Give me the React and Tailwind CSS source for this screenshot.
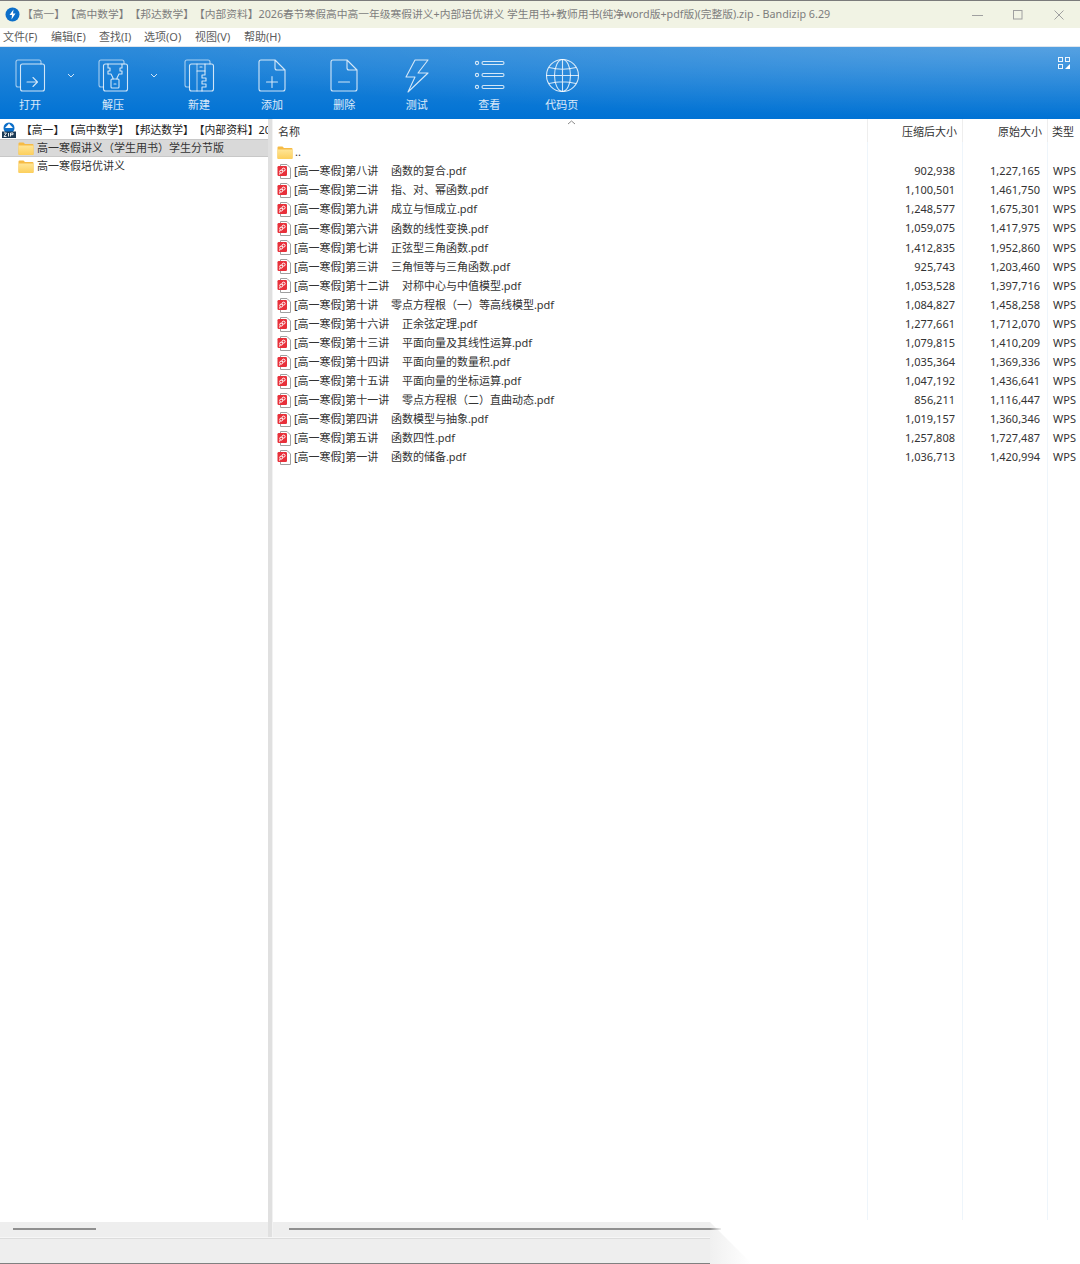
import React from "react";

const FONT = "font-['Noto_Sans','Noto_Sans_CJK_SC',sans-serif]";

const rows = [
  ["[高一寒假]第八讲    函数的复合.pdf", "902,938", "1,227,165"],
  ["[高一寒假]第二讲    指、对、幂函数.pdf", "1,100,501", "1,461,750"],
  ["[高一寒假]第九讲    成立与恒成立.pdf", "1,248,577", "1,675,301"],
  ["[高一寒假]第六讲    函数的线性变换.pdf", "1,059,075", "1,417,975"],
  ["[高一寒假]第七讲    正弦型三角函数.pdf", "1,412,835", "1,952,860"],
  ["[高一寒假]第三讲    三角恒等与三角函数.pdf", "925,743", "1,203,460"],
  ["[高一寒假]第十二讲    对称中心与中值模型.pdf", "1,053,528", "1,397,716"],
  ["[高一寒假]第十讲    零点方程根（一）等高线模型.pdf", "1,084,827", "1,458,258"],
  ["[高一寒假]第十六讲    正余弦定理.pdf", "1,277,661", "1,712,070"],
  ["[高一寒假]第十三讲    平面向量及其线性运算.pdf", "1,079,815", "1,410,209"],
  ["[高一寒假]第十四讲    平面向量的数量积.pdf", "1,035,364", "1,369,336"],
  ["[高一寒假]第十五讲    平面向量的坐标运算.pdf", "1,047,192", "1,436,641"],
  ["[高一寒假]第十一讲    零点方程根（二）直曲动态.pdf", "856,211", "1,116,447"],
  ["[高一寒假]第四讲    函数模型与抽象.pdf", "1,019,157", "1,360,346"],
  ["[高一寒假]第五讲    函数四性.pdf", "1,257,808", "1,727,487"],
  ["[高一寒假]第一讲    函数的储备.pdf", "1,036,713", "1,420,994"],
];

function Folder() {
  return (
    <svg width="16" height="13" viewBox="0 0 16 13" className="shrink-0">
      <defs>
        <linearGradient id="fg" x1="0" y1="0" x2="0" y2="1">
          <stop offset="0" stopColor="#ffe596" />
          <stop offset="1" stopColor="#fccf5c" />
        </linearGradient>
      </defs>
      <path d="M0.5 1.5a1 1 0 0 1 1-1h4l1.5 1.5h7.5a1 1 0 0 1 1 1V12a1 1 0 0 1-1 1h-13a1 1 0 0 1-1-1Z" fill="#f6bb45" />
      <path d="M0.5 3.5h15V12a1 1 0 0 1-1 1h-13a1 1 0 0 1-1-1Z" fill="url(#fg)" />
    </svg>
  );
}

function PdfIcon() {
  return (
    <svg width="14" height="15" viewBox="0 0 14 15" className="shrink-0">
      <path d="M3.5 0.5H10L13.5 4V14.5H3.5Z" fill="#fff" stroke="#a0a0a0" />
      <rect x="0.5" y="2" width="9.5" height="10" rx="1.2" fill="#e8303a" />
      <circle cx="4.2" cy="7.6" r="1.5" fill="none" stroke="#fff" />
      <circle cx="6.6" cy="5.6" r="1.5" fill="none" stroke="#fff" />
      <path d="M3 9L2.6 10.6" fill="none" stroke="#fff" />
    </svg>
  );
}

function Ico({ children }) {
  return (
    <svg width="40" height="36" viewBox="0 0 40 36" fill="none" stroke="#fff" strokeOpacity="0.8" strokeWidth="1.1" strokeLinecap="round" strokeLinejoin="round" className="shrink-0">
      {children}
    </svg>
  );
}

const Back = () => <path d="M10.5 29H8a2 2 0 0 1-2-2V4a2 2 0 0 1 2-2H29a2 2 0 0 1 2 2V6" strokeOpacity="0.6" />;
const Front = () => <rect x="10.5" y="6" width="24" height="27" rx="2" />;
const Doc = () => <path d="M9 2H23L33 12V31a2 2 0 0 1-2 2H9a2 2 0 0 1-2-2V4a2 2 0 0 1 2-2ZM23 2V10a2 2 0 0 0 2 2H33" />;

const tools = [
  { label: "打开", w: "w-[60px]", icon: <Ico><Back /><Front /><path d="M17 24H27M23 19.5L27.5 24L23 28.5" /></Ico> },
  { chevron: true, w: "w-[22px]" },
  { label: "解压", w: "w-[62px]", icon: <Ico><Back /><Front /><path d="M15 6V10H17V13H15V16H18L20 20V21M29 6V10H27V13H29V16H26L24 20V21" /><rect x="18" y="21" width="8" height="9" rx="1" /><path d="M21 26H23" /></Ico> },
  { chevron: true, w: "w-[20px]" },
  { label: "新建", w: "w-[70px]", icon: <Ico><Back /><Front /><path d="M18 6V33" strokeOpacity="0.6" /><path d="M18 13H26V6" /><path d="M21 9H23" /><path d="M26 13V17H23V20H27V23H23V26H27V29H23V33" /></Ico> },
  { spacer: true, w: "w-[2px]" },
  { label: "添加", w: "w-[72px]", icon: <Ico><Doc /><path d="M14.5 24H25.5M20 18.5V29.5" /></Ico> },
  { label: "删除", w: "w-[72.5px]", icon: <Ico><Doc /><path d="M14.5 24H25.5" /></Ico> },
  { label: "测试", w: "w-[72.5px]", icon: <Ico><path d="M31 2H18L9 19H18L11 34L31 15H21Z" /></Ico> },
  { label: "查看", w: "w-[72.5px]", icon: <Ico><circle cx="8" cy="5" r="1.6" /><circle cx="8" cy="17" r="1.6" /><circle cx="8" cy="29" r="1.6" /><rect x="13" y="3.5" width="22" height="3" rx="1.5" /><rect x="13" y="15.5" width="22" height="3" rx="1.5" /><rect x="13" y="27.5" width="22" height="3" rx="1.5" /></Ico> },
  { label: "代码页", w: "w-[72.5px]", icon: <Ico><circle cx="20.5" cy="17.5" r="16" /><ellipse cx="20.5" cy="17.5" rx="8" ry="16" /><path d="M20.5 1.5V33.5M4.5 17.5H36.5M7 9.5Q20.5 13 34 9.5M7 25.5Q20.5 22 34 25.5" /></Ico> },
];

export default function App() {
  return (
    <div className={`relative flex h-[1264px] w-[1080px] flex-col overflow-hidden bg-white text-[11px] text-[#333] ${FONT}`}>
      {/* Title bar */}
      <div className="flex h-[28px] shrink-0 items-center border-t border-[#7b7b7b] bg-[#f1f3e4] pl-[5px]">
        <svg width="15" height="15" viewBox="0 0 15 15" className="shrink-0">
          <circle cx="7.5" cy="7.5" r="7" fill="#0c6fc9" />
          <path d="M8.5 2.5L4.5 8H7L6.5 12.5L10.5 6.5H8Z" fill="#fff" />
        </svg>
        <span className="ml-[2px] whitespace-pre text-[10.75px] text-[#7d7d7d] [text-spacing-trim:space-all]">【高一】【高中数学】【邦达数学】【内部资料】2026春节寒假高中高一年级寒假讲义+内部培优讲义 学生用书+教师用书(纯净word版+pdf版)(完整版).zip - Bandizip 6.29</span>
        <div className="ml-auto flex items-center">
          <svg width="92" height="14" viewBox="0 0 92 14" fill="none" stroke="#a0a0a0" className="mr-[16px]">
            <path d="M0 7.5H11" />
            <rect x="41.5" y="2.5" width="8.5" height="8.5" />
            <path d="M82.5 2.5L91.5 11.5M91.5 2.5L82.5 11.5" />
          </svg>
        </div>
      </div>

      {/* Menu */}
      <div className="flex h-[18px] shrink-0 items-center pl-[3px] pt-[1px] text-[#5c5c5c]">
        <span className="w-[48px]">文件(F)</span>
        <span className="w-[48px]">编辑(E)</span>
        <span className="w-[45px]">查找(I)</span>
        <span className="w-[51px]">选项(O)</span>
        <span className="w-[49px]">视图(V)</span>
        <span>帮助(H)</span>
      </div>

      {/* Toolbar */}
      <div className="relative flex h-[73px] shrink-0 border-t border-[#dfe6ee] bg-[radial-gradient(ellipse_1000px_70px_at_100%_0%,rgba(255,255,255,0.2),transparent),linear-gradient(180deg,#2c8ada,#0072d4)]">
        {tools.map((t, i) =>
          t.chevron ? (
            <div key={i} className={`${t.w} flex shrink-0 justify-center pt-[26px]`}>
              <svg width="8" height="5" viewBox="0 0 8 5" fill="none" stroke="#fff" strokeOpacity="0.8"><path d="M1 1L4 4L7 1" /></svg>
            </div>
          ) : t.spacer ? (
            <div key={i} className={`${t.w} shrink-0`} />
          ) : (
            <div key={i} className={`${t.w} flex shrink-0 flex-col items-center pt-[11px] text-white/85`}>
              {t.icon}
              <span className="mt-[4px] leading-[14px]">{t.label}</span>
            </div>
          )
        )}
        <svg width="12" height="12" viewBox="0 0 12 12" fill="none" stroke="#fff" strokeOpacity="0.9" className="absolute left-[1058px] top-[10px]">
          <rect x="0.5" y="0.5" width="4" height="4" />
          <rect x="7.5" y="0.5" width="4" height="4" />
          <rect x="0.5" y="7.5" width="4" height="4" />
          <path d="M7 12L12 7V12Z" fill="#fff" stroke="none" />
        </svg>
      </div>

      {/* Main */}
      <div className="flex min-h-0 flex-1">
        {/* Tree */}
        <div className="flex w-[268px] shrink-0 flex-col overflow-hidden pt-[2px]">
          <div className="flex h-[18px] items-center overflow-hidden whitespace-nowrap pl-[1px] text-[#222]">
            <svg width="16" height="16" viewBox="0 0 16 16" className="shrink-0">
              <circle cx="8" cy="6" r="5.5" fill="#0c6fc9" />
              <path d="M8 1.5L4 6H12Z" fill="#fff" />
              <rect x="1" y="9.5" width="14" height="6.5" fill="#1c3a54" />
              <path d="M3 11H5.5L3 14.5H5.5M7.5 11V14.5M9.5 14.5V11H12V12.7H9.5" fill="none" stroke="#fff" strokeWidth="0.9" />
            </svg>
            <span className="ml-[4px] text-[10.8px] [text-spacing-trim:space-all]">【高一】【高中数学】【邦达数学】【内部资料】2026春节</span>
          </div>
          <div className="flex h-[18px] items-center gap-[3px] border-y border-[#c8c8c8] bg-[#d9d9d9] pl-[18px]">
            <Folder />
            <span>高一寒假讲义（学生用书）学生分节版</span>
          </div>
          <div className="flex h-[18px] items-center gap-[3px] pl-[18px]">
            <Folder />
            <span>高一寒假培优讲义</span>
          </div>
        </div>

        {/* Splitter */}
        <div className="w-[5px] shrink-0 border-r border-[#f2f2f2] bg-[#e0e0e0]" />

        {/* List */}
        <div className="relative flex min-w-0 flex-1 flex-col">
          <svg width="9" height="5" viewBox="0 0 9 5" fill="none" stroke="#8a8a8a" className="absolute left-[294px] top-[1px]"><path d="M1 4L4.5 1L8 4" /></svg>
          <div className="flex h-[23px] shrink-0 items-center">
            <div className="w-[594px] pl-[5px] pt-[3px]">名称</div>
            <div className="flex h-full w-[95px] items-center justify-end border-l border-[#eeeeee] pr-[5px] pt-[3px]">压缩后大小</div>
            <div className="flex h-full w-[85px] items-center justify-end border-l border-[#eeeeee] pr-[5px] pt-[3px]">原始大小</div>
            <div className="flex h-full flex-1 items-center border-l border-[#eeeeee] pl-[4px] pt-[3px]">类型</div>
          </div>
          <div className="flex min-h-0 flex-1">
            <div className="w-[594px] shrink-0 pt-[1px]">
              <div className="flex h-[19.07px] items-center gap-[2px] pl-[4px]">
                <Folder />
                <span>..</span>
              </div>
              {rows.map((r) => (
                <div key={r[0]} className="flex h-[19.07px] items-center gap-[3px] pl-[4px]">
                  <PdfIcon />
                  <span className="whitespace-pre [word-spacing:0.3px]">{r[0]}</span>
                </div>
              ))}
            </div>
            <div className="mb-[2px] w-[95px] shrink-0 border-l border-[#eef5fb] pr-[7px] pt-[20px] text-right">
              {rows.map((r) => (
                <div key={r[0]} className="flex h-[19.07px] items-center justify-end">{r[1]}</div>
              ))}
            </div>
            <div className="mb-[2px] w-[85px] shrink-0 border-l border-[#eef5fb] pr-[7px] pt-[20px] text-right">
              {rows.map((r) => (
                <div key={r[0]} className="flex h-[19.07px] items-center justify-end">{r[2]}</div>
              ))}
            </div>
            <div className="mb-[2px] flex-1 border-l border-[#eef5fb] pl-[5px] pt-[20px]">
              {rows.map((r) => (
                <div key={r[0]} className="flex h-[19.07px] items-center">WPS</div>
              ))}
            </div>
          </div>
        </div>
      </div>

      {/* Scrollbars */}
      <div className="flex h-[16px] w-[710px] shrink-0 border-b border-[#f6f6f6] bg-[#eeeeee]">
        <div className="w-[268px] shrink-0 pl-[13px] pt-[6px]"><div className="h-[2px] w-[83px] bg-[#8f8f8f]" /></div>
        <div className="w-[5px] shrink-0 border-r border-[#f2f2f2] bg-[#e0e0e0]" />
        <div className="flex-1 pl-[16px] pt-[6px]"><div className="h-[2px] w-full bg-[#8f8f8f]" /></div>
      </div>

      {/* Status */}
      <div className="h-[26px] w-[710px] shrink-0 border-b border-t border-b-[#808080] border-t-[#dcdcdc] bg-[#eeeeee]" />

      {/* Torn screenshot corner */}
      <svg width="44" height="42" viewBox="0 0 44 42" className="absolute left-[710px] top-[1222px]">
        <defs>
          <linearGradient id="tear" x1="0" y1="0" x2="1" y2="0">
            <stop offset="0" stopColor="#f0f0f0" />
            <stop offset="1" stopColor="#ffffff" />
          </linearGradient>
          <linearGradient id="tearbar" x1="0" y1="0" x2="1" y2="0">
            <stop offset="0" stopColor="#8f8f8f" />
            <stop offset="1" stopColor="#f0f0f0" />
          </linearGradient>
        </defs>
        <path d="M0 0L42 42H0Z" fill="url(#tear)" />
        <rect x="0" y="6" width="11" height="2" fill="url(#tearbar)" />
      </svg>
    </div>
  );
}
